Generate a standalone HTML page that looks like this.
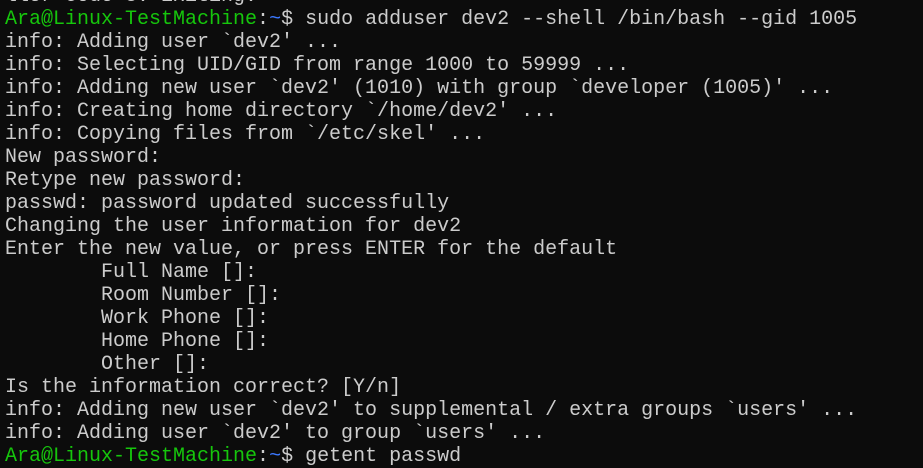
<!DOCTYPE html>
<html><head><style>
html,body{margin:0;padding:0;background:#0c0c0c;width:923px;height:456px;overflow:hidden}
pre{margin:0;position:absolute;left:5px;top:-15px;font-family:"Liberation Mono",monospace;font-size:20px;line-height:23px;color:#cccccc;white-space:pre}
.g{color:#16c60c}.b{color:#3b78ff}
</style></head><body>
<pre>ller code 3. Exiting.
<span class="g">Ara@Linux-TestMachine</span>:<span class="b">~</span>$ sudo adduser dev2 --shell /bin/bash --gid 1005
info: Adding user `dev2' ...
info: Selecting UID/GID from range 1000 to 59999 ...
info: Adding new user `dev2' (1010) with group `developer (1005)' ...
info: Creating home directory `/home/dev2' ...
info: Copying files from `/etc/skel' ...
New password:
Retype new password:
passwd: password updated successfully
Changing the user information for dev2
Enter the new value, or press ENTER for the default
        Full Name []:
        Room Number []:
        Work Phone []:
        Home Phone []:
        Other []:
Is the information correct? [Y/n]
info: Adding new user `dev2' to supplemental / extra groups `users' ...
info: Adding user `dev2' to group `users' ...
<span class="g">Ara@Linux-TestMachine</span>:<span class="b">~</span>$ getent passwd</pre>
</body></html>
